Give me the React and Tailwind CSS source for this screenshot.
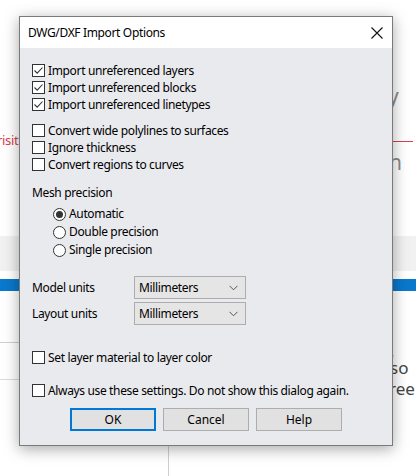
import React from "react";

function CheckBox({ checked }) {
  return (
    <span className="w-[13px] h-[13px] border border-[#333] bg-white flex items-center justify-center shrink-0">
      {checked && (
        <svg width="11" height="11" viewBox="0 0 11 11">
          <path d="M1.5 5.5 L4.2 8.2 L9.5 2.5" fill="none" stroke="#333" strokeWidth="1.1" />
        </svg>
      )}
    </span>
  );
}

function CheckRow({ checked, label }) {
  return (
    <div className="h-[17px] flex items-center">
      <CheckBox checked={checked} />
      <span className="ml-[3px]">{label}</span>
    </div>
  );
}

function Radio({ checked, label }) {
  return (
    <div className="h-[18px] flex items-center">
      <span className="w-[13px] h-[13px] rounded-full border border-[#333] bg-white flex items-center justify-center shrink-0">
        {checked && <span className="w-[7px] h-[7px] rounded-full bg-[#333]" />}
      </span>
      <span className="ml-[3px]">{label}</span>
    </div>
  );
}

function Combo({ label }) {
  return (
    <div className="h-[23px] flex items-center">
      <span className="w-[102px]">{label}</span>
      <div className="w-[112px] h-[23px] bg-[#e5e5e5] border border-[#adadad] flex items-center justify-between pl-[4px] pr-[7px]">
        <span>Millimeters</span>
        <svg width="9" height="6" viewBox="0 0 9 6">
          <path d="M0.5 0.8 L4.5 4.8 L8.5 0.8" fill="none" stroke="#555" strokeWidth="1" />
        </svg>
      </div>
    </div>
  );
}

function Btn({ children, primary }) {
  return (
    <div
      className={
        "w-[86px] h-[23px] flex items-center justify-center bg-[#e1e1e1] " +
        (primary ? "border-2 border-[#0078d7]" : "border border-[#adadad]")
      }
    >
      {children}
    </div>
  );
}

export default function App() {
  return (
    <div
      className="relative w-[416px] h-[476px] bg-white overflow-hidden"
      style={{ fontFamily: '"Noto Sans", "Open Sans", sans-serif' }}
    >
      {/* background page */}
      <div className="absolute left-[388px] top-[86px] text-[21px] text-[#8a8a8a] leading-none">y</div>
      <div className="absolute left-[-3px] top-[134px] text-[13px] text-[#d8404f] leading-none tracking-[-0.3px]">risit</div>
      <div className="absolute left-[380px] top-[141px] w-[33px] h-[1px] bg-[#d8404f]" />
      <div className="absolute left-[389px] top-[152px] text-[21px] text-[#8a8a8a] leading-none">n</div>
      <div className="absolute left-0 top-[236px] w-[416px] h-[35px] bg-[#f1f1f1]" />
      <div className="absolute left-0 top-[279px] w-[416px] h-[12px] bg-[#0a78cc]" />
      <div className="absolute left-0 top-[342px] w-[60px] h-[1px] bg-[#cfcfcf]" />
      <div className="absolute left-0 top-[379px] w-[60px] h-[1px] bg-[#dcdcdc]" />
      <div className="absolute left-[390px] top-[342px] text-[17px] text-[#444] leading-none">, so</div>
      <div className="absolute left-[389px] top-[380px] text-[17px] text-[#444] leading-none">ree</div>
      <div className="absolute left-[168px] top-[420px] w-[1px] h-[56px] bg-[#cfcfcf]" />

      {/* dialog */}
      <div className="absolute left-[19px] top-[16px] w-[374px] h-[430px] border border-[#7a7a7a] flex flex-col text-[12px] tracking-[-0.35px] text-black shadow-[0_3px_14px_rgba(0,0,0,0.35)]">
        <div className="h-[31px] bg-white flex items-center justify-between pl-[8px] pr-[9px] shrink-0">
          <span>DWG/DXF Import Options</span>
          <svg width="12" height="12" viewBox="0 0 12 12">
            <path d="M0.5 0.5 L11.5 11.5 M11.5 0.5 L0.5 11.5" stroke="#111" strokeWidth="1.1" />
          </svg>
        </div>
        <div className="flex-1 bg-[#e9eaee] pl-[12px] pt-[14px] flex flex-col">
          <CheckRow checked label="Import unreferenced layers" />
          <CheckRow checked label="Import unreferenced blocks" />
          <CheckRow checked label="Import unreferenced linetypes" />
          <div className="mt-[9px]">
            <CheckRow label="Convert wide polylines to surfaces" />
            <CheckRow label="Ignore thickness" />
            <CheckRow label="Convert regions to curves" />
          </div>
          <div className="mt-[11px] h-[17px] flex items-center">Mesh precision</div>
          <div className="mt-[4px] pl-[21px]">
            <Radio checked label="Automatic" />
            <Radio label="Double precision" />
            <Radio label="Single precision" />
          </div>
          <div className="mt-[17px] flex flex-col gap-[3px]">
            <Combo label="Model units" />
            <Combo label="Layout units" />
          </div>
          <div className="mt-[24px]">
            <CheckRow label="Set layer material to layer color" />
          </div>
          <div className="mt-[16px]">
            <CheckRow label="Always use these settings. Do not show this dialog again." />
          </div>
          <div className="mt-[9px] pl-[38px] flex gap-[7px] tracking-normal">
            <Btn primary>OK</Btn>
            <Btn>Cancel</Btn>
            <Btn>Help</Btn>
          </div>
        </div>
      </div>
    </div>
  );
}
